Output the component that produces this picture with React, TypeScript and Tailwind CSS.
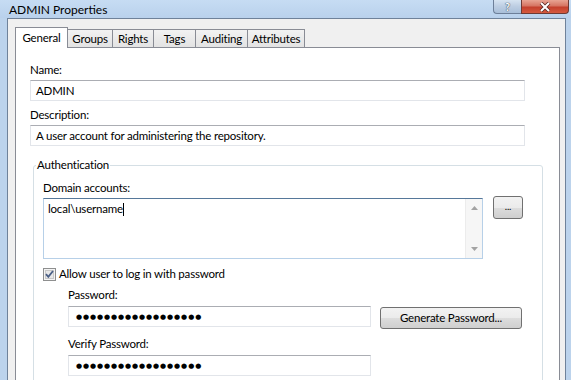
import React from "react";

const tabs = [
  { label: "General", w: "w-[53px]" },
  { label: "Groups", w: "w-[46px]" },
  { label: "Rights", w: "w-[42px]" },
  { label: "Tags", w: "w-[43px]" },
  { label: "Auditing", w: "w-[53px]" },
  { label: "Attributes", w: "w-[58px]" },
];

const dots = "●".repeat(18);

const btn =
  "border border-[#707070] rounded-[3px] bg-[linear-gradient(#f2f2f2,#ebebeb_50%,#dddddd_50%,#cfcfcf)] flex items-center justify-center text-black";

const field =
  "h-[21px] bg-white border border-[#e2e5ea] border-t-[#abadb3] flex items-center px-[5px]";

const pwd = "font-['DejaVu_Sans',sans-serif] text-[7px] tracking-[0.9px] pl-[7px]";

const TitleBar = () => (
  <div className="h-[22px] flex justify-between bg-[linear-gradient(#c6dcf3,#b9d1ec)]">
    <span className="pl-[9px] pt-[2px] text-[12px] tracking-normal">ADMIN Properties</span>
    <div className="flex h-[14px] mr-[2px]">
      <div className="w-[28px] h-full border border-r-0 border-t-0 border-[#6d7f99] rounded-bl-[4px] bg-[linear-gradient(#d6e3f1,#bccde2_50%,#a9bfd9)] flex items-center justify-center text-white font-bold text-[11px] leading-none [text-shadow:0_0_1px_#2d3a4d,0_0_1px_#2d3a4d]">
        ?
      </div>
      <div className="w-[48px] h-full border border-t-0 border-[#6d3a34] rounded-br-[4px] bg-[linear-gradient(#e8a493,#d67563_45%,#c4402d_55%,#d55a3f)] flex items-center justify-center">
        <svg width="14" height="10" viewBox="0 0 14 10">
          <path d="M3 1 L11 9 M11 1 L3 9" stroke="#5a2a24" strokeWidth="3.6" />
          <path d="M3 1 L11 9 M11 1 L3 9" stroke="#ffffff" strokeWidth="2" />
        </svg>
      </div>
    </div>
  </div>
);

const Checkbox = () => (
  <svg width="13" height="13" viewBox="0 0 13 13" className="shrink-0">
    <rect x="0.5" y="0.5" width="12" height="12" fill="#f4f4f4" stroke="#8e8f8f" />
    <rect x="2.5" y="2.5" width="8" height="8" fill="#e8e8e8" stroke="#c8c8c8" />
    <path d="M3 6.2 L5.3 8.8 L10 3" fill="none" stroke="#4a5f86" strokeWidth="1.8" />
  </svg>
);

const Arrow = ({ up }: { up?: boolean }) => (
  <svg width="7" height="4" viewBox="0 0 7 4">
    <path d={up ? "M0 4 L3.5 0 L7 4 Z" : "M0 0 L3.5 4 L7 0 Z"} fill="#a3a3a3" />
  </svg>
);

export default function App() {
  return (
    <div className="w-[571px] h-[380px] overflow-hidden flex flex-col bg-[#bcd3ec] font-['Lato',sans-serif] text-[11.5px] tracking-[-0.2px] leading-[16px] text-black">
      <TitleBar />
      <div className="flex-1 flex pl-[7px] pr-[5px]">
        <div className="flex-1 flex flex-col bg-[#f0f0f0] border border-b-0 border-[#6f829a] pt-[8px] pl-[7px] pr-[5px]">
          {/* tab strip */}
          <div className="flex items-end h-[20px]">
            {tabs.map((t, i) => (
              <div
                key={t.label}
                className={
                  i === 0
                    ? `${t.w} h-[21px] -mb-[1px] relative z-10 bg-white border border-b-0 border-[#898c95] flex justify-center pt-[2px]`
                    : `${t.w} h-[18px] -ml-px bg-[linear-gradient(#f2f2f2,#e3e3e3)] border border-b-0 border-[#898c95] flex justify-center pt-[1px]`
                }
              >
                {t.label}
              </div>
            ))}
          </div>

          {/* panel */}
          <div className="flex-1 bg-white border border-b-0 border-[#898c95] pt-[14px] pl-[14px]">
            <div>Name:</div>
            <div className={`${field} w-[495px] mt-[2px]`}>ADMIN</div>
            <div className="mt-[6px]">Description:</div>
            <div className={`${field} w-[495px] mt-[2px]`}>
              A user account for administering the repository.
            </div>

            <fieldset className="ml-[3px] mt-[11px] w-[510px] border border-[#d5dfe5] rounded-[3px] pl-[9px] pb-[20px]">
              <legend className="-ml-[7px] px-[1px]">Authentication</legend>
              <div className="mt-[7px]">Domain accounts:</div>
              <div className="flex items-start mt-[2px]">
                <div className="w-[440px] h-[61px] bg-white border border-[#b7d0e8] border-t-[#56789a] flex">
                  <div className="flex-1 pl-[4px] pt-[2px] flex items-start">
                    <span>local\username</span>
                    <span className="w-px h-[13px] bg-black mt-[2px]" />
                  </div>
                  <div className="w-[17px] bg-[#f6f6f6] border-l border-[#ececec] flex flex-col items-center justify-between py-[7px]">
                    <Arrow up />
                    <Arrow />
                  </div>
                </div>
                <div className={`${btn} ml-[10px] -mt-[2px] w-[30px] h-[23px] text-[10px] pb-[3px]`}>...</div>
              </div>

              <div className="flex items-center h-[16px] mt-[7px]">
                <Checkbox />
                <span className="ml-[3px]">Allow user to log in with password</span>
              </div>

              <div className="pl-[25px]">
                <div className="mt-[5px]">Password:</div>
                <div className="flex items-start mt-[3px]">
                  <div className={`${field} w-[303px] ${pwd}`}>{dots}</div>
                  <div className={`${btn} ml-[9px] mt-[1px] w-[142px] h-[22px]`}>Generate Password...</div>
                </div>
                <div className="mt-[7px]">Verify Password:</div>
                <div className={`${field} w-[303px] mt-[3px] ${pwd}`}>{dots}</div>
              </div>
            </fieldset>
          </div>
        </div>
      </div>
    </div>
  );
}
